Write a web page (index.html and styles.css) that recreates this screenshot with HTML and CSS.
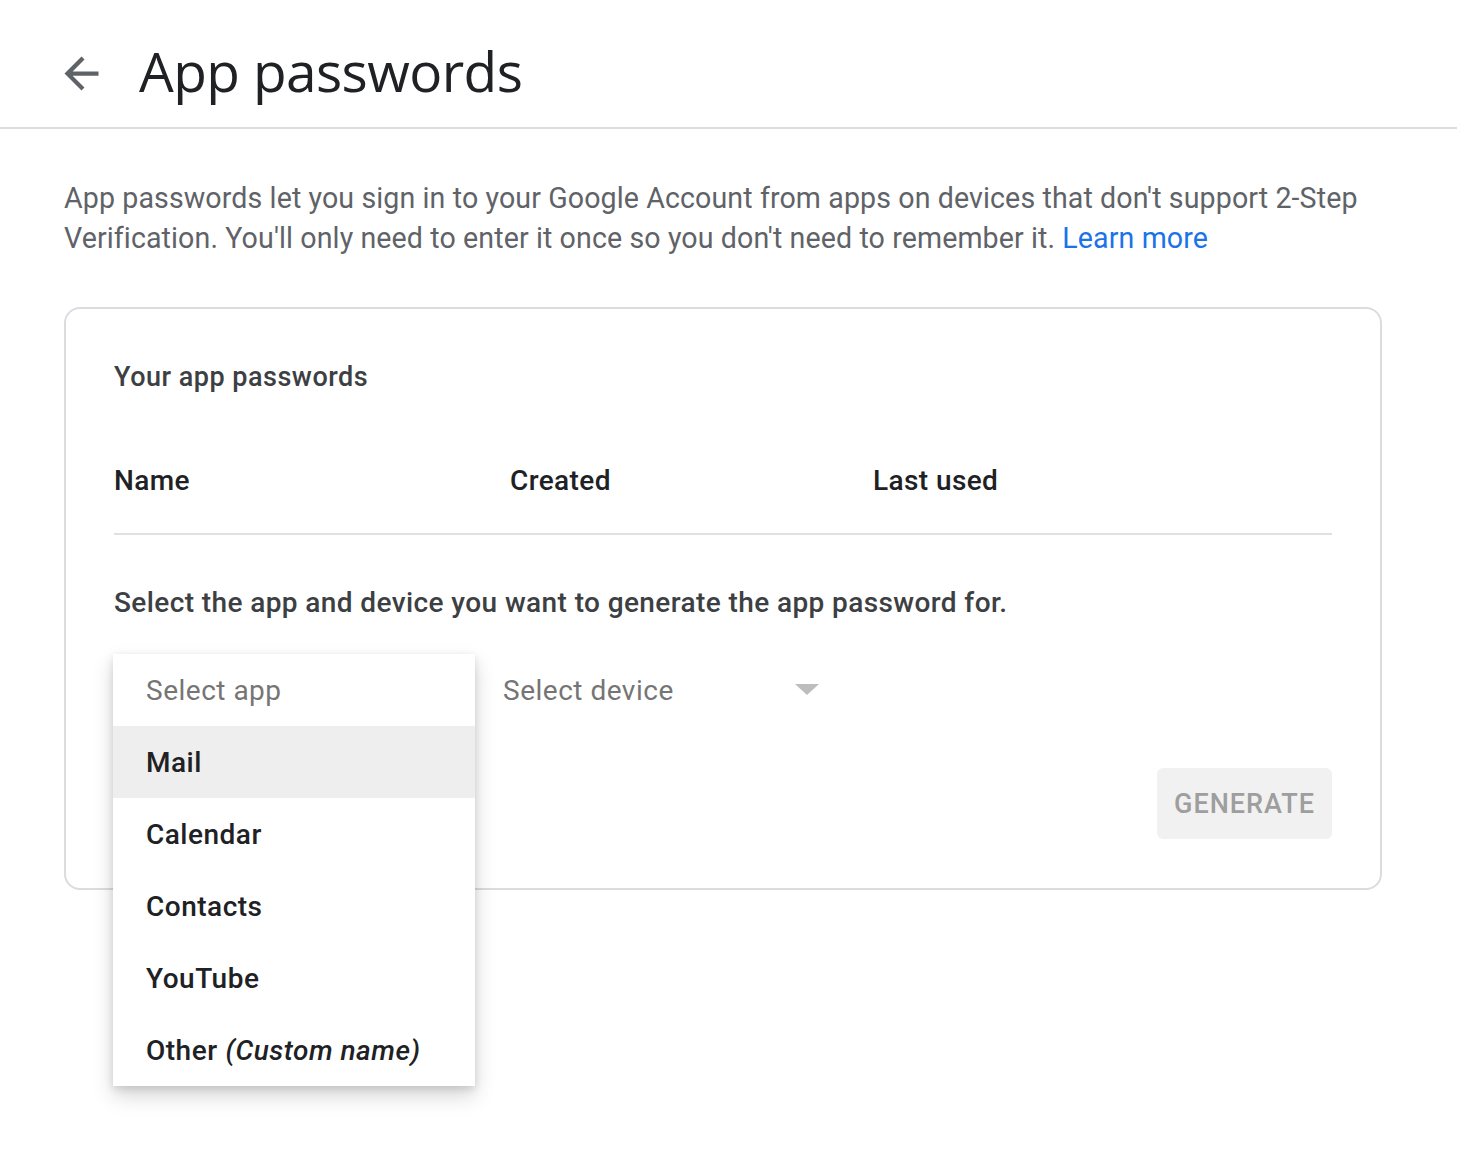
FILE: index.html
```html
<!DOCTYPE html>
<html lang="en">
<head>
<meta charset="utf-8">
<title>App passwords</title>
<link rel="stylesheet" href="styles.css">
</head>
<body>
<header class="topbar">
  <svg class="back" viewBox="0 0 24 24" width="51" height="51" aria-hidden="true"><path d="M20 11H7.83l5.59-5.59L12 4l-8 8 8 8 1.41-1.41L7.83 13H20v-2z" fill="#5f6368"/></svg>
  <h1 class="title">App passwords</h1>
</header>
<main class="main">
  <p class="intro">App passwords let you sign in to your Google Account from apps on devices that don't support 2-Step Verification. You'll only need to enter it once so you don't need to remember it. <a class="link" href="#">Learn more</a></p>
  <section class="card">
    <h2 class="card-title">Your app passwords</h2>
    <div class="table-head">
      <span class="col col-name">Name</span>
      <span class="col col-created">Created</span>
      <span class="col col-used">Last used</span>
    </div>
    <p class="prompt">Select the app and device you want to generate the app password for.</p>
    <div class="selects">
      <div class="select select-app">
        <span class="placeholder">Select app</span>
        <ul class="menu">
          <li class="menu-item menu-placeholder">Select app</li>
          <li class="menu-item active">Mail</li>
          <li class="menu-item">Calendar</li>
          <li class="menu-item">Contacts</li>
          <li class="menu-item">YouTube</li>
          <li class="menu-item">Other <em class="custom">(Custom name)</em></li>
        </ul>
      </div>
      <div class="select select-device">
        <span class="placeholder">Select device</span>
        <span class="caret"></span>
      </div>
    </div>
    <div class="actions">
      <button class="generate" type="button">GENERATE</button>
    </div>
  </section>
</main>
</body>
</html>
```
FILE: styles.css
```css
* { box-sizing: border-box; }
html, body { margin: 0; padding: 0; background: #fff; }
body {
  font-family: Roboto, "Noto Sans", Arial, sans-serif;
  color: #202124;
  min-height: 100vh;
  padding-bottom: 120px;
}

.topbar {
  height: 129px;
  border-bottom: 2px solid #dadce0;
  display: flex;
  align-items: center;
  padding-left: 56px;
  padding-top: 14px;
}
.back { display: block; margin-right: 32px; margin-top: 6px; }
.title {
  margin: 0;
  font-family: "Open Sans", Roboto, sans-serif;
  font-weight: 400;
  font-size: 55px;
  line-height: 64px;
  color: #202124;
  letter-spacing: -0.6px;
}

.main { padding: 0 75px 0 64px; }
.intro {
  margin: 49px 0 0;
  font-size: 28.6px;
  line-height: 40px;
  color: #5f6368;
  letter-spacing: 0.1px;
}
.link { color: #1a73e8; text-decoration: none; }

.card {
  margin-top: 49px;
  border: 2px solid #dadce0;
  border-radius: 16px;
  padding: 50px 48px 49px 48px;
}
.card-title {
  margin: 0;
  font-size: 27px;
  line-height: 36px;
  font-weight: 500;
  color: #3c4043;
  letter-spacing: 0.5px;
}
.table-head {
  display: flex;
  margin-top: 68px;
  padding-bottom: 34px;
  border-bottom: 2px solid #e0e0e0;
  font-size: 28px;
  line-height: 36px;
  font-weight: 500;
  color: #202124;
  letter-spacing: 0.4px;
}
.col-name { width: 396px; }
.col-created { width: 363px; }

.prompt {
  margin: 50px 0 0;
  font-size: 28px;
  line-height: 36px;
  font-weight: 500;
  color: #3c4043;
  letter-spacing: 0.4px;
}

.selects { display: flex; margin-top: 33px; gap: 28px; }
.select {
  position: relative;
  height: 72px;
  display: flex;
  align-items: center;
  font-size: 28px;
}
.select-app { width: 361px; padding-left: 32px; }
.select-device { width: 330px; padding-left: 0; justify-content: space-between; padding-right: 14px; }
.placeholder { color: #757575; letter-spacing: 0.5px; }
.caret {
  width: 0; height: 0;
  margin-top: -2px;
  border-left: 12px solid transparent;
  border-right: 12px solid transparent;
  border-top: 11px solid #bdbdbd;
}

.menu {
  position: absolute;
  left: -1px;
  top: 0;
  width: 362px;
  margin: 0;
  padding: 0;
  list-style: none;
  background: #fff;
  box-shadow: 0 10px 20px rgba(0,0,0,0.16), 0 3px 8px rgba(0,0,0,0.12);
  z-index: 5;
}
.menu-item {
  height: 72px;
  display: flex;
  align-items: center;
  padding-left: 33px;
  font-size: 28px;
  font-weight: 500;
  color: #202124;
  letter-spacing: 0.5px;
}
.menu-item.menu-placeholder { color: #757575; font-weight: 400; }
.menu-item.active { background: #eeeeee; }
.custom { font-style: italic; margin-left: 8px; }

.actions { display: flex; justify-content: flex-end; margin-top: 42px; }
.generate {
  width: 175px;
  height: 71px;
  border: none;
  border-radius: 6px;
  background: #f1f1f1;
  color: #9e9e9e;
  font-family: Roboto, sans-serif;
  font-size: 27px;
  font-weight: 500;
  letter-spacing: 1px;
}
```
